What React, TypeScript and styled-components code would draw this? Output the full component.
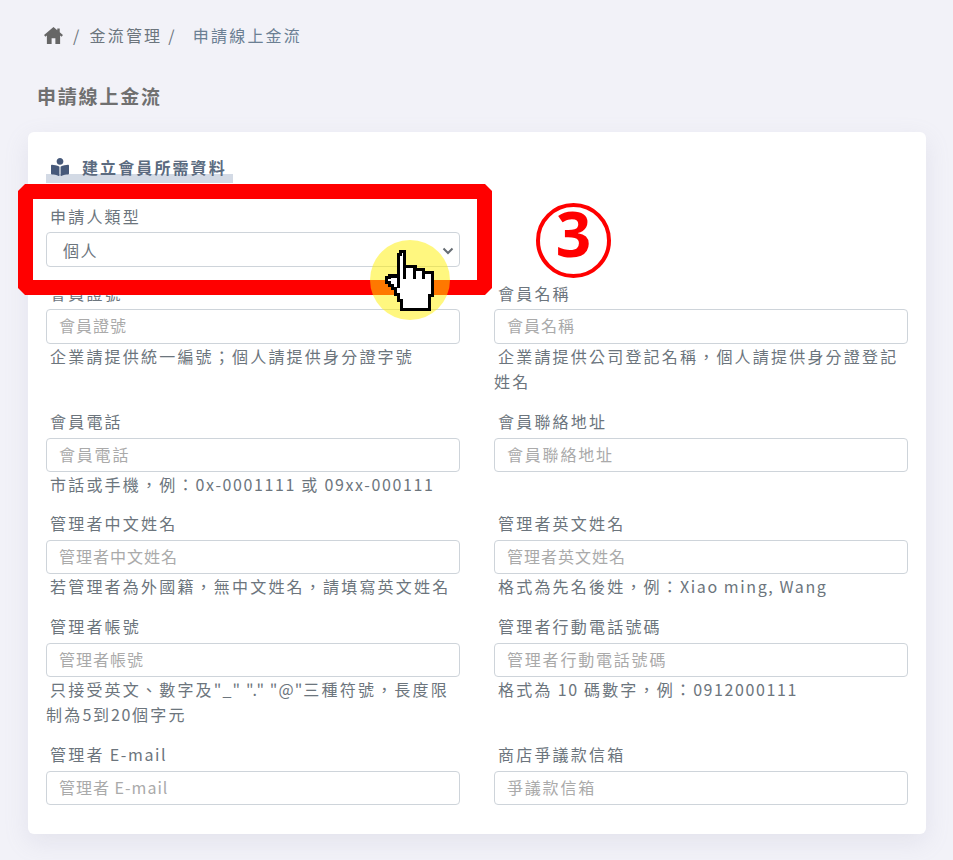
import styled, { createGlobalStyle } from "styled-components";
import { FaBookReader } from "react-icons/fa";

const GlobalStyle = createGlobalStyle`
  html, body {
    margin: 0;
    padding: 0;
    background: #f2f2f8;
  }
  * {
    box-sizing: border-box;
  }
`;

const Page = styled.div`
  position: relative;
  width: 953px;
  height: 860px;
  overflow: hidden;
  padding: 23px 27px 0 28px;
  font-family: "Noto Sans CJK TC", "Noto Sans", sans-serif;
  color: #6c757d;
  letter-spacing: 2.2px;
`;

const Breadcrumb = styled.nav`
  display: flex;
  align-items: center;
  height: 24px;
  padding-left: 16px;
  font-size: 16px;
  line-height: 24px;
  letter-spacing: 2.2px;
  color: #6c757d;
`;

const Crumb = styled.span<{ $current?: boolean }>`
  color: ${({ $current }) => ($current ? "#6b7f93" : "#6c757d")};
  margin-left: ${({ $current }) => ($current ? "8px" : "0")};
`;

const Sep = styled.span`
  margin: 0 8px 0 6px;
`;

const PageTitle = styled.h1`
  margin: 37px 0 0 9px;
  font-size: 19px;
  line-height: 24px;
  font-weight: 700;
  letter-spacing: 1.8px;
  color: #707070;
`;

const Card = styled.section`
  margin-top: 24px;
  height: 702px;
  padding: 24px 18px 0;
  background: #fff;
  border-radius: 6px;
  box-shadow: 0 8px 24px rgba(150, 150, 180, 0.16);
`;

const SectionHead = styled.div`
  display: flex;
  align-items: center;
  gap: 13px;
  width: 187px;
  height: 27px;
  padding: 0 5px 5px;
  font-size: 16px;
  font-weight: 700;
  line-height: 24px;
  letter-spacing: 2.1px;
  white-space: nowrap;
  color: #5b6b80;
  background: linear-gradient(to bottom, transparent 18px, #d3dae5 18px);
`;

const BookIcon = styled(FaBookReader)`
  flex: none;
  color: #46597a;
`;

const FormGrid = styled.div`
  display: grid;
  grid-template-columns: 414px 414px;
  column-gap: 34px;
`;

const Field = styled.div<{ $height: number }>`
  height: ${({ $height }) => $height}px;
`;

const SelectField = styled(Field)`
  grid-column: 1 / 3;
  width: 414px;
  padding-top: 21.5px;
`;

const Label = styled.label`
  display: block;
  height: 24px;
  padding-left: 4px;
  font-size: 16px;
  line-height: 22px;
  color: #6c757d;
`;

const TextInput = styled.div<{ $spacing?: number }>`
  height: 34.5px;
  margin-top: 3.5px;
  padding-left: 12px;
  border: 1px solid #ced4da;
  border-radius: 4px;
  font-size: 16px;
  line-height: 31.5px;
  letter-spacing: ${({ $spacing }) => $spacing ?? 1}px;
  color: #aaa;
  background: #fff;
`;

const SelectBox = styled(TextInput)`
  display: flex;
  align-items: center;
  justify-content: space-between;
  padding: 3px 5px 0 16px;
  letter-spacing: 1.6px;
  color: #6c757d;
`;

const Help = styled.div`
  padding: 0 4px;
  font-size: 16px;
  line-height: 25px;
  color: #6c757d;
`;

const HelpLine = styled.div<{ $flush?: boolean }>`
  margin-left: ${({ $flush }) => ($flush ? "-4px" : "0")};
`;

const Latin = styled.span<{ $tight?: boolean }>`
  letter-spacing: ${({ $tight }) => ($tight ? "1.1px" : "1.6px")};
`;

const Frame = styled.div`
  position: absolute;
  left: 18px;
  top: 184px;
  width: 474px;
  height: 111px;
  border: 15px solid #ff0000;
  clip-path: polygon(7px 0, calc(100% - 7px) 0, 100% 7px, 100% calc(100% - 7px), calc(100% - 7px) 100%, 7px 100%, 0 calc(100% - 7px), 0 7px);
`;

const Spot = styled.div`
  position: absolute;
  left: 370px;
  top: 240px;
  width: 80px;
  height: 80px;
  border-radius: 50%;
  background: rgba(255, 240, 0, 0.5);
`;

const Pointer = styled.svg`
  position: absolute;
  left: 385px;
  top: 250px;
`;

const StepMark = styled.span`
  position: absolute;
  left: 536px;
  top: 203px;
  width: 75px;
  height: 75px;
  padding-bottom: 16px;
  border: 4px solid #ff0000;
  border-radius: 50%;
  display: flex;
  align-items: center;
  justify-content: center;
  font-family: "Noto Sans", sans-serif;
  font-size: 62px;
  font-weight: 700;
  line-height: 1;
  letter-spacing: 0;
  color: #ff0000;
`;

const ChevronIcon = () => (
  <svg width="12" height="12" viewBox="0 0 12 12">
    <path d="M1.5 3.5l4.5 4.5 4.5-4.5" fill="none" stroke="#666c73" strokeWidth="2" />
  </svg>
);

const HomeIcon = () => (
  <svg width="19" height="17" viewBox="0 0 20 18" style={{ marginRight: 4 }}>
    <path
      fill="#666"
      d="M10 0l4 3.4V1.5h2.6v4.1L20 8.6l-1.4 1.6L17 8.9V18h-5v-6H8v6H3V8.9l-1.6 1.3L0 8.6z"
    />
  </svg>
);

// hand cursor drawn on a pixel grid
const HandPointer = () => (
  <Pointer width="49" height="62" viewBox="0 0 16 20.25" shapeRendering="crispEdges">
    <path
      fill="#fff"
      stroke="#000"
      d="M4.5 1.5h.5V.5h1.5v5H10v1h2.5v1h3V15h-1v4.5h-9v-3h-1v-2h-1v-2h-1v-1h-1v-1h-1V9h1V8.5h3z"
    />
    <path
      fill="none"
      stroke="#000"
      d="M4.5 8v4.5M6.5 5.5v4M9.5 6v3.5M12.5 7v2.5"
    />
  </Pointer>
);

// latin runs are set a little tighter than the CJK around them
const spaced = (text: string) =>
  text.split(/([\x20-\x7e]+)/).map((run, i) =>
    i % 2 === 1 ? (
      <Latin key={i} $tight={run.includes('"')}>
        {run}
      </Latin>
    ) : (
      run
    )
  );

type FieldData = {
  label: string;
  placeholder: string;
  spacing?: number;
  help?: string[];
};

const rows: { height: number; fields: [FieldData, FieldData] }[] = [
  {
    height: 128.6,
    fields: [
      { label: "會員證號", placeholder: "會員證號", help: ["企業請提供統一編號；個人請提供身分證字號"] },
      {
        label: "會員名稱",
        placeholder: "會員名稱",
        help: ["企業請提供公司登記名稱，個人請提供身分證登記", "姓名"],
      },
    ],
  },
  {
    height: 102.2,
    fields: [
      {
        label: "會員電話",
        placeholder: "會員電話",
        spacing: 1.8,
        help: ["市話或手機，例：0x-0001111 或 09xx-000111"],
      },
      { label: "會員聯絡地址", placeholder: "會員聯絡地址", spacing: 1.8 },
    ],
  },
  {
    height: 102.8,
    fields: [
      { label: "管理者中文姓名", placeholder: "管理者中文姓名", help: ["若管理者為外國籍，無中文姓名，請填寫英文姓名"] },
      { label: "管理者英文姓名", placeholder: "管理者英文姓名", help: ["格式為先名後姓，例：Xiao ming, Wang"] },
    ],
  },
  {
    height: 128.1,
    fields: [
      { label: "管理者帳號", placeholder: "管理者帳號", help: ['只接受英文、數字及"_" "." "@"三種符號，長度限', "制為5到20個字元"] },
      {
        label: "管理者行動電話號碼",
        placeholder: "管理者行動電話號碼",
        spacing: 1.8,
        help: ["格式為 10 碼數字，例：0912000111"],
      },
    ],
  },
  {
    height: 70,
    fields: [
      { label: "管理者 E-mail", placeholder: "管理者 E-mail" },
      { label: "商店爭議款信箱", placeholder: "爭議款信箱", spacing: 1.8 },
    ],
  },
];

export default function App() {
  return (
    <Page>
      <GlobalStyle />
      <Breadcrumb>
        <HomeIcon />
        <Sep>/</Sep>
        <Crumb>金流管理</Crumb>
        <Sep>/</Sep>
        <Crumb $current>申請線上金流</Crumb>
      </Breadcrumb>
      <PageTitle>申請線上金流</PageTitle>
      <Card>
        <SectionHead>
          <BookIcon size={18} />
          建立會員所需資料
        </SectionHead>
        <FormGrid>
          <SelectField $height={98.5}>
            <Label>申請人類型</Label>
            <SelectBox>
              個人
              <ChevronIcon />
            </SelectBox>
          </SelectField>
          {rows.map((row) =>
            row.fields.map((field) => (
              <Field key={field.label} $height={row.height}>
                <Label>{spaced(field.label)}</Label>
                <TextInput $spacing={field.spacing}>{field.placeholder}</TextInput>
                {field.help && (
                  <Help>
                    {field.help.map((line, i) => (
                      // wrapped lines start at the input's edge
                      <HelpLine key={line} $flush={i === 1}>
                        {spaced(line)}
                      </HelpLine>
                    ))}
                  </Help>
                )}
              </Field>
            ))
          )}
        </FormGrid>
      </Card>
      <Frame />
      <Spot />
      <HandPointer />
      <StepMark>3</StepMark>
    </Page>
  );
}
